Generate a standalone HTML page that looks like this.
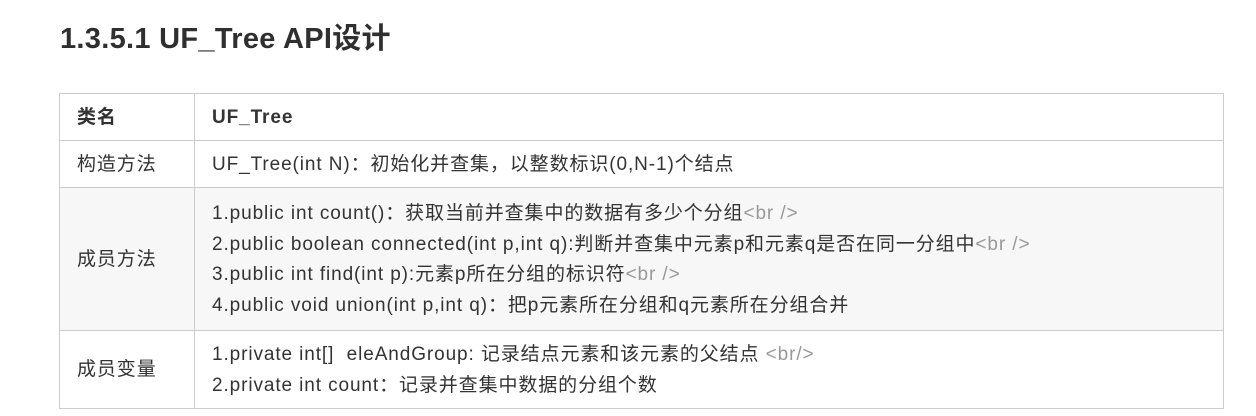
<!DOCTYPE html>
<html><head><meta charset="utf-8"><style>
body{margin:0;background:#fff;width:1256px;height:416px;overflow:hidden;font-family:"Liberation Sans","Noto Sans CJK SC",sans-serif;color:#333;}
h1{position:absolute;left:60px;top:20px;margin:0;font-size:29px;font-weight:bold;color:#2f2f2f;line-height:38px;letter-spacing:0.3px;}
table{position:absolute;left:59px;top:93px;border-collapse:collapse;width:1165px;font-size:19px;letter-spacing:0.9px;}
td{border:1px solid #ccc;padding:2px 0 0 17px;vertical-align:middle;line-height:30.5px;}
td.l{width:117px;}
.g{color:#999}
</style></head><body>
<h1>1.3.5.1 UF_Tree API设计</h1>
<table>
<tr style="height:47px"><td class="l"><b>类名</b></td><td><b>UF_Tree</b></td></tr>
<tr style="height:47px"><td class="l">构造方法</td><td>UF_Tree(int N)：初始化并查集，以整数标识(0,N-1)个结点</td></tr>
<tr style="height:143px;background:#f7f7f7"><td class="l">成员方法</td><td>1.public int count()：获取当前并查集中的数据有多少个分组<span class="g">&lt;br /&gt;</span><br>2.public boolean connected(int p,int q):判断并查集中元素p和元素q是否在同一分组中<span class="g">&lt;br /&gt;</span><br>3.public int find(int p):元素p所在分组的标识符<span class="g">&lt;br /&gt;</span><br>4.public void union(int p,int q)：把p元素所在分组和q元素所在分组合并</td></tr>
<tr style="height:78px"><td class="l">成员变量</td><td>1.private int[]&nbsp; eleAndGroup: 记录结点元素和该元素的父结点 <span class="g">&lt;br/&gt;</span><br>2.private int count：记录并查集中数据的分组个数</td></tr>
</table>
</body></html>
